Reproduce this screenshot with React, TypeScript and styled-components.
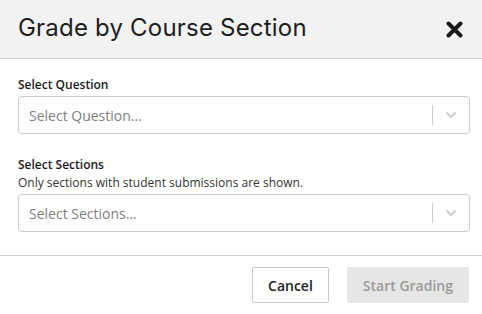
import React from 'react';
import styled, { createGlobalStyle } from 'styled-components';

const Global = createGlobalStyle`
  html, body { margin: 0; padding: 0; background: #fff; }
  body { font-family: "Open Sans", "Noto Sans", sans-serif; color: #222; }
`;

const Modal = styled.div`
  width: 482px;
  height: 314px;
  display: flex;
  flex-direction: column;
  background: #fff;
`;

const Header = styled.div`
  height: 58px;
  display: flex;
  align-items: center;
  justify-content: space-between;
  padding: 0 19px 0 18px;
  background: #f2f2f2;
  border-bottom: 1px solid #d0d0d0;
`;

const Title = styled.h2`
  margin: 0;
  font-family: "Inter", sans-serif;
  font-size: 24px;
  font-weight: 400;
  letter-spacing: 0.2px;
  color: #1d1d1d;
  padding-bottom: 3px;
`;

const Close = styled.button`
  border: 0;
  background: none;
  padding: 0;
  width: 17px;
  height: 17px;
  display: flex;
  cursor: pointer;
`;

const Body = styled.div`
  padding: 18px 12px 0 18px;
  display: flex;
  flex-direction: column;
  gap: 23px;
  height: 197px;
  border-bottom: 1px solid #cfcfcf;
  box-sizing: border-box;
`;

const Field = styled.div`
  display: flex;
  flex-direction: column;
`;

const Label = styled.label`
  font-size: 12px;
  font-weight: 600;
  line-height: 16px;
  color: #1a1a1a;
  margin-bottom: 3px;
`;

const Hint = styled.div`
  font-size: 12px;
  line-height: 16px;
  color: #333;
  margin-top: -1px;
  margin-bottom: 3px;
`;

const Select = styled.div`
  height: 38px;
  box-sizing: border-box;
  border: 1px solid #cccccc;
  border-radius: 4px;
  display: flex;
  align-items: center;
`;

const Placeholder = styled.span`
  flex: 1;
  padding-left: 10px;
  font-size: 14px;
  color: #808080;
`;

const Divider = styled.span`
  width: 1px;
  height: 20px;
  background: #cccccc;
`;

const Chevron = styled.span`
  width: 36px;
  display: flex;
  justify-content: center;
  align-items: center;
`;

const Footer = styled.div`
  flex: 1;
  display: flex;
  justify-content: flex-end;
  align-items: center;
  gap: 18px;
  padding: 0 13px 0 0;
`;

const Button = styled.button<{ $disabled?: boolean }>`
  height: 36px;
  padding: 0 15px;
  font-family: "Open Sans", sans-serif;
  font-size: 14px;
  font-weight: 600;
  border-radius: 2px;
  border: 1px solid ${(p) => (p.$disabled ? '#e6e6e6' : '#c8c8c8')};
  background: ${(p) => (p.$disabled ? '#e6e6e6' : '#fff')};
  color: ${(p) => (p.$disabled ? '#999' : '#222')};
`;

const ChevronIcon = () => (
  <svg width="12" height="8" viewBox="0 0 12 8">
    <path d="M1.5 1.5 L6 6 L10.5 1.5" fill="none" stroke="#cccccc" strokeWidth="2" />
  </svg>
);

const SelectBox = ({ placeholder }: { placeholder: string }) => (
  <Select>
    <Placeholder>{placeholder}</Placeholder>
    <Divider />
    <Chevron>
      <ChevronIcon />
    </Chevron>
  </Select>
);

export default function App() {
  return (
    <Modal>
      <Global />
      <Header>
        <Title>Grade by Course Section</Title>
        <Close aria-label="Close">
          <svg width="17" height="17" viewBox="0 0 17 17">
            <path d="M2.5 2.5 L14.5 14.5 M14.5 2.5 L2.5 14.5" stroke="#1a1a1a" strokeWidth="4" strokeLinecap="round" />
          </svg>
        </Close>
      </Header>
      <Body>
        <Field>
          <Label>Select Question</Label>
          <SelectBox placeholder="Select Question..." />
        </Field>
        <Field>
          <Label>Select Sections</Label>
          <Hint>Only sections with student submissions are shown.</Hint>
          <SelectBox placeholder="Select Sections..." />
        </Field>
      </Body>
      <Footer>
        <Button>Cancel</Button>
        <Button $disabled>Start Grading</Button>
      </Footer>
    </Modal>
  );
}
